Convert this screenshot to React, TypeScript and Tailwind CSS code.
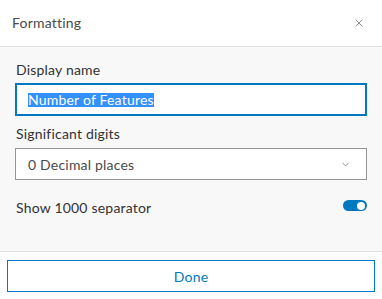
import { X, ChevronDown } from "lucide-react";

export default function App() {
	return (
		<div
			className="w-[382px] h-[299px] bg-white flex flex-col text-[#323232] tracking-[0.2px]"
			style={{ fontFamily: "Lato, 'Noto Sans', sans-serif" }}
		>
			<div className="h-[47px] flex items-center justify-between pl-3 pr-[17px] border-b border-[#dfdfdf]">
				<h1 className="text-[14px] text-[#4a4a4a] pb-[1px]">Formatting</h1>
				<X className="w-[12px] h-[12px] text-[#6a6a6a]" strokeWidth={1.5} />
			</div>

			<div className="h-[205px] bg-[#f8f8f8] px-[15px] pt-[13px] border-b border-[#dfdfdf]">
				<label className="block text-[14px] leading-[20px] pl-[1px]">Display name</label>
				<div className="mt-[3px] h-[33px] border-2 border-[#0079c1] bg-white flex items-center pl-[11px]">
					<span className="bg-[#3390ff] text-white text-[14px] leading-[14px]">
						Number of Features
					</span>
				</div>

				<label className="block text-[14px] leading-[20px] pl-[1px] mt-[8px]">
					Significant digits
				</label>
				<div className="mt-[4px] h-[32px] border border-[#959595] bg-white flex items-center justify-between pl-[12px] pr-[15px]">
					<span className="text-[14px] text-[#4a4a4a]">0 Decimal places</span>
					<ChevronDown className="w-[11px] h-[11px] text-[#6a6a6a]" strokeWidth={1.5} />
				</div>

				<div className="mt-[17px] flex items-center justify-between">
					<span className="text-[14px] pl-[1px]">Show 1000 separator</span>
					<div className="mb-[4px] w-[24px] h-[11px] rounded-full bg-[#0079c1] flex items-center justify-end pr-[2px]">
						<div className="w-[8px] h-[8px] rounded-full bg-white" />
					</div>
				</div>
			</div>

			<div className="flex-1 px-[7px] pt-[8px]">
				<button className="w-full h-[32px] border border-[#0079c1] text-[#0079c1] text-[14px] bg-white">
					Done
				</button>
			</div>
		</div>
	);
}
